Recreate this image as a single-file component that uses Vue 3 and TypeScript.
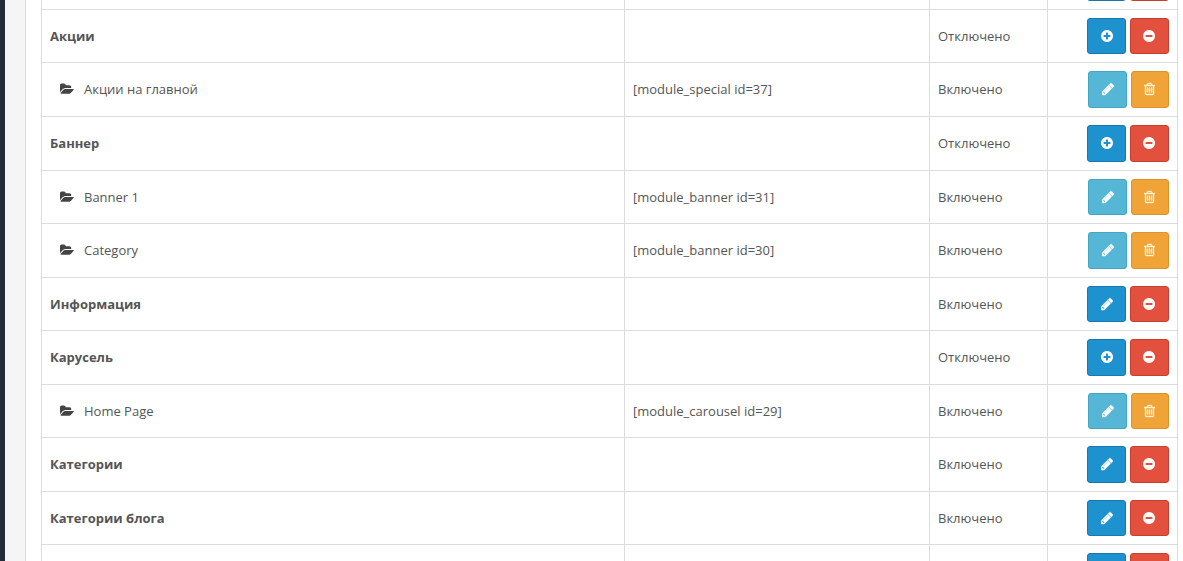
<script setup lang="ts">
type IconName = 'plus' | 'minus' | 'pencil' | 'trash' | 'folder'

interface Icon {
  box: string
  width: number
  path: string
}

interface ModuleRow {
  name: string
  code?: string
  enabled: boolean
  child?: boolean
  installed?: boolean
}

interface Action {
  label: string
  kind: string
  icon: IconName
}

const disc =
  'm320-64q0 209-103 385.5t-279.5 279.5-385.5 103-385.5-103-279.5-279.5-103-385.5 103-385.5 279.5-279.5 385.5-103 385.5 103 279.5 279.5 103 385.5z'

const icons: Record<IconName, Icon> = {
  plus: {
    box: '128 0 1536 1792',
    width: 12,
    path: 'M1344 960v-128q0-26-19-45t-45-19h-256v-256q0-26-19-45t-45-19h-128q-26 0-45 19t-19 45v256h-256q-26 0-45 19t-19 45v128q0 26 19 45t45 19h256v256q0 26 19 45t45 19h128q26 0 45-19t19-45v-256h256q26 0 45-19t19-45z' + disc,
  },
  minus: {
    box: '128 0 1536 1792',
    width: 12,
    path: 'M1344 960v-128q0-26-19-45t-45-19h-768q-26 0-45 19t-19 45v128q0 26 19 45t45 19h768q26 0 45-19t19-45z' + disc,
  },
  pencil: {
    box: '128 0 1536 1792',
    width: 12,
    path: 'M491 1536l91-91-235-235-91 91v107h128v128h107zm523-928q0-22-22-22-10 0-17 7l-542 542q-7 7-7 17 0 22 22 22 10 0 17-7l542-542q7-7 7-17zm-54-192l416 416-832 832h-416v-416zm683 96q0 53-37 90l-166 166-416-416 166-165q36-38 90-38 53 0 91 38l235 234q37 39 37 91z',
  },
  trash: {
    box: '192 0 1408 1792',
    width: 11,
    path: 'M704 736v576q0 14-9 23t-23 9h-64q-14 0-23-9t-9-23v-576q0-14 9-23t23-9h64q14 0 23 9t9 23zm256 0v576q0 14-9 23t-23 9h-64q-14 0-23-9t-9-23v-576q0-14 9-23t23-9h64q14 0 23 9t9 23zm256 0v576q0 14-9 23t-23 9h-64q-14 0-23-9t-9-23v-576q0-14 9-23t23-9h64q14 0 23 9t9 23zm128 724v-948h-896v948q0 22 7 40.5t14.5 27 10.5 8.5h832q3 0 10.5-8.5t14.5-27 7-40.5zm-672-1076h448l-48-117q-7-9-17-11h-317q-10 2-17 11zm928 32v64q0 14-9 23t-23 9h-96v948q0 83-47 143.5t-113 60.5h-832q-66 0-113-58.5t-47-141.5v-952h-96q-14 0-23-9t-9-23v-64q0-14 9-23t23-9h309l70-167q15-37 54-63t79-26h320q40 0 79 26t54 63l70 167h309q14 0 23 9t9 23z',
  },
  folder: {
    box: '0 0 1920 1792',
    width: 14,
    path: 'M1879 952q0 31-31 66l-336 396q-43 51-120.5 86.5t-143.5 35.5h-1088q-34 0-60.5-13t-26.5-43q0-31 31-66l336-396q43-51 120.5-86.5t143.5-35.5h1088q34 0 60.5 13t26.5 43zm-343-344v160h-832q-94 0-197 47.5t-164 119.5l-337 396-5 6q0-4-.5-12.5t-.5-12.5v-960q0-92 66-158t158-66h320q92 0 158 66t66 158v32h544q92 0 158 66t66 158z',
  },
}

const rows: ModuleRow[] = [
  { name: '', enabled: true, installed: true },
  { name: 'Акции', enabled: false },
  { name: 'Акции на главной', code: '[module_special id=37]', enabled: true, child: true },
  { name: 'Баннер', enabled: false },
  { name: 'Banner 1', code: '[module_banner id=31]', enabled: true, child: true },
  { name: 'Category', code: '[module_banner id=30]', enabled: true, child: true },
  { name: 'Информация', enabled: true, installed: true },
  { name: 'Карусель', enabled: false },
  { name: 'Home Page', code: '[module_carousel id=29]', enabled: true, child: true },
  { name: 'Категории', enabled: true, installed: true },
  { name: 'Категории блога', enabled: true, installed: true },
  { name: '', enabled: true, installed: true },
]

function actionsFor(row: ModuleRow): Action[] {
  if (row.child) {
    return [
      { label: 'Редактировать', kind: 'info', icon: 'pencil' },
      { label: 'Удалить', kind: 'warning', icon: 'trash' },
    ]
  }
  return [
    row.installed
      ? { label: 'Редактировать', kind: 'primary', icon: 'pencil' }
      : { label: 'Добавить', kind: 'primary', icon: 'plus' },
    { label: 'Деактивировать', kind: 'danger', icon: 'minus' },
  ]
}
</script>

<template>
  <div class="page">
    <aside class="sidebar"></aside>
    <main class="content">
      <section class="panel">
        <table class="modules">
          <colgroup>
            <col class="col-name" />
            <col class="col-code" />
            <col class="col-status" />
            <col class="col-actions" />
          </colgroup>
          <tbody>
            <tr v-for="(row, i) in rows" :key="i">
              <td>
                <span v-if="row.child" class="child">
                  <svg class="folder" :viewBox="icons.folder.box" :width="icons.folder.width" height="14" aria-hidden="true">
                    <path :d="icons.folder.path" />
                  </svg>
                  {{ row.name }}
                </span>
                <strong v-else>{{ row.name }}</strong>
              </td>
              <td>{{ row.code }}</td>
              <td><template v-if="row.name">{{ row.enabled ? 'Включено' : 'Отключено' }}</template></td>
              <td>
                <div class="actions">
                  <button
                    v-for="action in actionsFor(row)"
                    :key="action.kind"
                    type="button"
                    :class="['btn', action.kind]"
                    :aria-label="action.label"
                  >
                    <svg
                      :class="action.icon"
                      :viewBox="icons[action.icon].box"
                      :width="icons[action.icon].width"
                      height="14"
                      aria-hidden="true"
                    >
                      <path :d="icons[action.icon].path" />
                    </svg>
                  </button>
                </div>
              </td>
            </tr>
          </tbody>
        </table>
      </section>
    </main>
  </div>
</template>

<style>
body {
  margin: 0;
}
</style>

<style scoped>
.page {
  display: flex;
  height: 100vh;
  overflow: hidden;
  background: #f5f5f5;
  color: #555;
  font: 13px/20px "Open Sans", "Noto Sans", sans-serif;
}

.sidebar {
  flex: 0 0 5px;
  background: #242d37;
}

.content {
  flex: 1;
  min-width: 0;
  padding-left: 20px;
}

.panel {
  box-sizing: border-box;
  min-height: 100%;
  padding: 0 5px 0 15px;
  border-left: 1px solid #dcdcdc;
  background: #fff;
}

/* The list is scrolled so that the first row is mostly out of view. */
.modules {
  width: 100%;
  margin-top: -44px;
  table-layout: fixed;
  border-collapse: separate;
  border-spacing: 0;
  border-left: 1px solid #dcdcdc;
}

.col-code {
  width: 305px;
}

.col-status {
  width: 118px;
}

.col-actions {
  width: 130px;
}

td {
  box-sizing: border-box;
  height: 53px;
  padding: 8px;
  border-right: 1px solid #dcdcdc;
  border-bottom: 1px solid #dcdcdc;
  vertical-align: middle;
}

tr:nth-child(1) td,
tr:nth-child(3) td,
tr:nth-child(2n + 4) td {
  height: 54px;
}

tr:nth-child(3) td:not(:last-child),
tr:nth-child(2n + 4) td:not(:last-child) {
  padding-bottom: 9px;
}

strong {
  font-weight: 700;
}

.child {
  display: flex;
  align-items: center;
  gap: 10px;
  padding-left: 10px;
}

.folder {
  flex: none;
  fill: #444;
}

.actions {
  display: flex;
  justify-content: flex-end;
  gap: 4px;
}

.btn {
  display: flex;
  align-items: flex-start;
  box-sizing: border-box;
  width: 39px;
  height: 36px;
  margin: 0;
  padding: 10px 12px 10px 13px;
  border: 1px solid;
  border-radius: 3px;
  color: #fff;
}

tr:nth-child(1) .btn,
tr:nth-child(3) .btn,
tr:nth-child(2n + 4) .btn {
  height: 37px;
}

.btn svg {
  flex: none;
  fill: currentColor;
}

.btn .pencil,
.btn .trash {
  stroke: currentColor;
  stroke-width: 50px;
}

.primary {
  border-color: #1978ab;
  background: #1e91cf;
}

.danger {
  padding-left: 12px;
  border-color: #c6402f;
  background: #e3503e;
}

.info {
  border-color: #44a5c2;
  background: #55b6d5;
}

.warning {
  width: 38px;
  padding-left: 12px;
  border-color: #d8952f;
  background: #f0a437;
  color: #fff3d6;
}
</style>
